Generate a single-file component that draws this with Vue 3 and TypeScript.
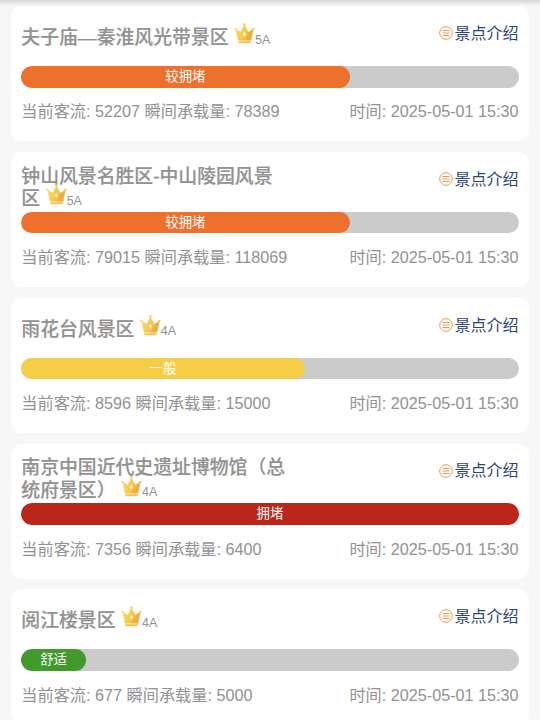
<script setup lang="ts">
interface Spot {
  name: string
  grade: string
  level: string
  color: string
  percent: number
  flow: number
  capacity: number
  long?: boolean
}

const time = '2025-05-01 15:30'

const spots: Spot[] = [
  { name: '夫子庙—秦淮风光带景区', grade: '5A', level: '较拥堵', color: '#ed702d', percent: 66, flow: 52207, capacity: 78389 },
  { name: '钟山风景名胜区-中山陵园风景区', grade: '5A', level: '较拥堵', color: '#ed702d', percent: 66, flow: 79015, capacity: 118069, long: true },
  { name: '雨花台风景区', grade: '4A', level: '一般', color: '#f6cd46', percent: 57, flow: 8596, capacity: 15000 },
  { name: '南京中国近代史遗址博物馆（总统府景区）', grade: '4A', level: '拥堵', color: '#bb261a', percent: 100, flow: 7356, capacity: 6400, long: true },
  { name: '阅江楼景区', grade: '4A', level: '舒适', color: '#419a2b', percent: 13, flow: 677, capacity: 5000 },
]
</script>

<template>
  <main class="page">
    <svg class="defs" aria-hidden="true">
      <defs>
        <linearGradient id="crownGold" x1="0" y1="0" x2="1" y2="0.3">
          <stop offset="0" stop-color="#f9dc70" />
          <stop offset="0.5" stop-color="#f7cb4a" />
          <stop offset="1" stop-color="#f1b044" />
        </linearGradient>
      </defs>
    </svg>
    <article v-for="spot in spots" :key="spot.name" class="card">
      <header class="head">
        <h2 class="title" :class="{ long: spot.long }">
          {{ spot.name }}<span class="grade">
            <svg class="crown" viewBox="0 0 21 21">
              <path d="M1.8 6.2 6.8 9.2 10.4 2.2 14.2 9.2 19.2 6.2 16.9 17.2H4.2Z" fill="url(#crownGold)" stroke="url(#crownGold)" stroke-width=".6" stroke-linejoin="round" />
              <path d="M14.2 9.2 19.2 6.2 16.9 17.2H10L14 12Z" fill="#f0a33b" opacity=".4" />
              <circle cx="1.5" cy="5.8" r="1.1" fill="#f5d273" />
              <circle cx="10.4" cy="1.5" r="1.2" fill="#f0c36c" />
              <circle cx="19.4" cy="5.8" r="1.1" fill="#f4bd66" />
              <path d="M10.4 8.8 12.3 11.3 10.4 13.8 8.5 11.3Z" fill="#fff4c8" />
              <path d="M4.4 18.2H16.7V20.2H4.4Z" fill="#f5c04e" />
            </svg><small>{{ spot.grade }}</small>
          </span>
        </h2>
        <a class="intro">
          <svg class="list-icon" viewBox="0 0 14 14" fill="none" stroke="#e99a55">
            <circle cx="7" cy="7" r="6.3" stroke-width="1" />
            <path d="M3.5 4.5H10.5M3.5 7H10.5M3.5 9.5H10.5" stroke-width="1" />
          </svg>
          <span>景点介绍</span>
        </a>
      </header>
      <div class="track">
        <div class="fill" :style="{ width: spot.percent + '%', background: spot.color }">{{ spot.level }}</div>
      </div>
      <footer class="info">
        <span>当前客流: {{ spot.flow }} 瞬间承载量: {{ spot.capacity }}</span>
        <span>时间: {{ time }}</span>
      </footer>
    </article>
  </main>
</template>

<style>
body {
  background: #f7f7f7;
  overflow: hidden;
}
</style>

<style scoped>
.page {
  box-sizing: border-box;
  height: 720px;
  overflow: hidden;
  padding: 6.2px 11px 0;
  display: flex;
  flex-direction: column;
  gap: 10.8px;
  background: linear-gradient(#d8d8d8, #f7f7f7 6px);
  font-family: "Liberation Sans", "Noto Sans CJK SC", sans-serif;
  color: #929292;
}
.defs {
  position: absolute;
  width: 0;
  height: 0;
}
.card {
  box-sizing: border-box;
  flex: 0 0 135px;
  padding: 0 10.4px 0 10.3px;
  border-radius: 11px;
  background: #fff;
}
.head {
  height: 59.8px;
  display: flex;
  justify-content: space-between;
  align-items: flex-start;
}
.title {
  width: 268px;
  margin: 0;
  padding-top: 21px;
  font-size: 18.85px;
  font-weight: 500;
  line-height: 22.5px;
  -webkit-text-stroke: 0.18px #929292;
}
.title.long {
  padding-top: 13.6px;
}
.grade {
  display: inline-flex;
  align-items: flex-end;
  height: 20px;
  margin: -6px 0 0 5.5px;
  white-space: nowrap;
  vertical-align: 0;
}
.crown {
  width: 21px;
  height: 21px;
  margin-bottom: 6px;
}
.grade small {
  padding-bottom: 3.5px;
  font-size: 12.5px;
  font-weight: 400;
  line-height: 14px;
  -webkit-text-stroke: 0;
}
.intro {
  display: flex;
  align-items: center;
  gap: 2px;
  padding-top: 16.8px;
  font-size: 16px;
  line-height: 22px;
  color: #2c4478;
}
.list-icon {
  width: 14px;
  height: 14px;
  margin-bottom: 1.4px;
}
.track {
  height: 21.6px;
  border-radius: 11px;
  background: #cbcbcb;
  overflow: hidden;
}
.fill {
  height: 100%;
  border-radius: 11px;
  color: #fff;
  font-size: 13.4px;
  line-height: 21px;
  text-align: center;
}
.info {
  display: flex;
  justify-content: space-between;
  padding-top: 12.9px;
  font-size: 16.2px;
  line-height: 22px;
  white-space: nowrap;
}
</style>
